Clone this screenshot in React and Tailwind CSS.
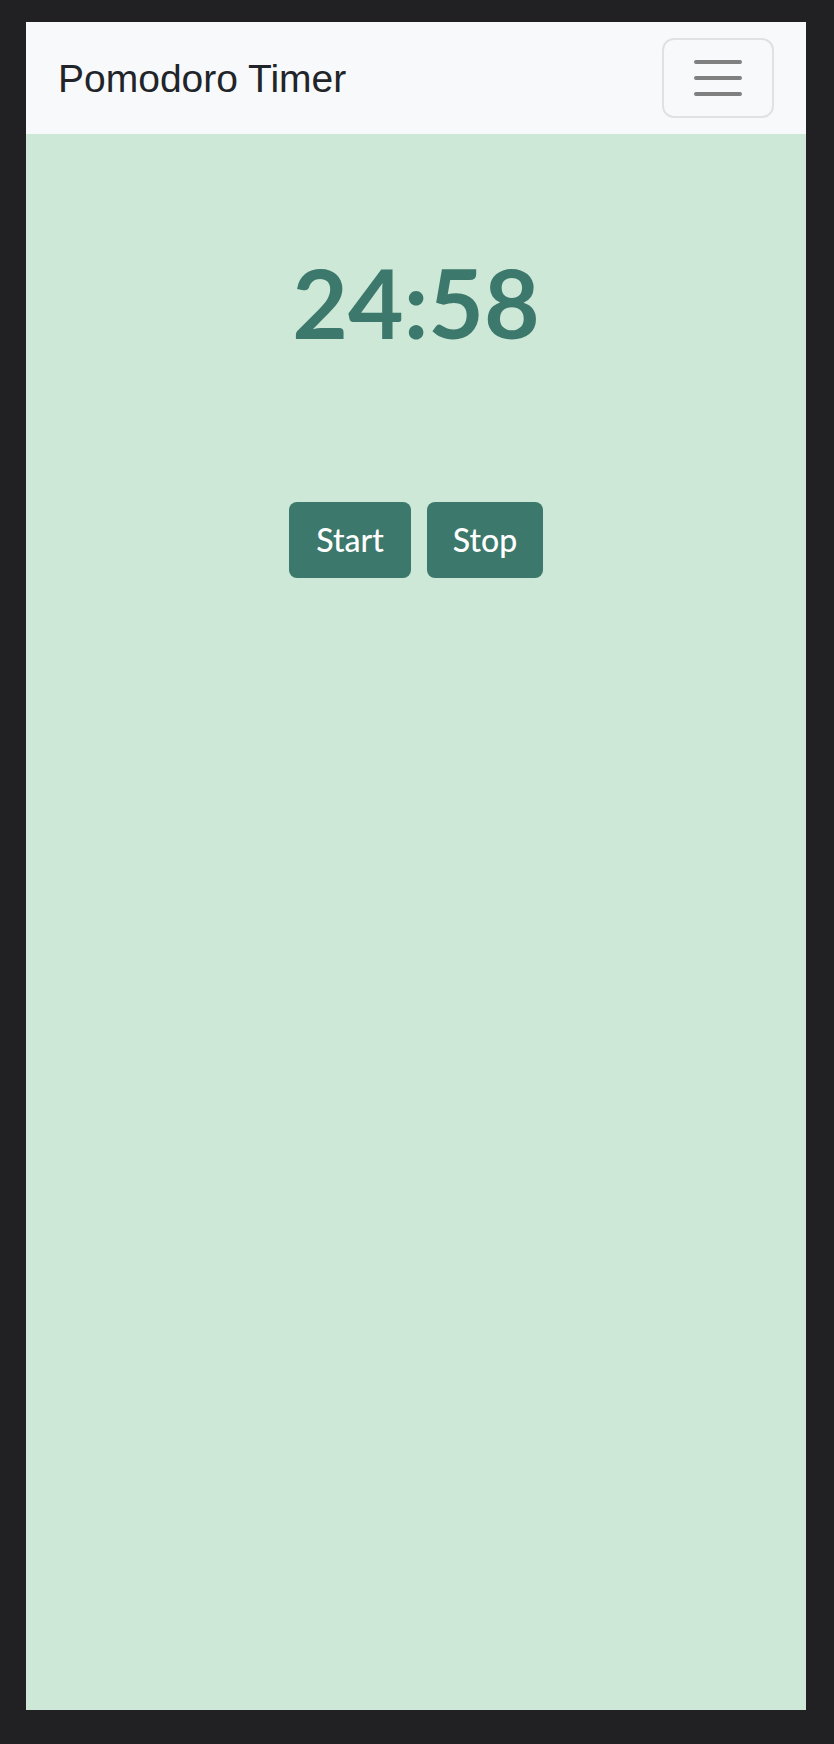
export default function App() {
  return (
    <div className="min-h-screen bg-[#212124] pl-[26px] pr-[28px] pt-[22px] pb-[34px]">
      <div className="flex h-[1688px] flex-col bg-[#cde8d7]">
        {/* navbar */}
        <nav className="flex h-[112px] items-center justify-between bg-[#f8f9fa] pl-[32px] pr-[32px]">
          <span className="font-['Liberation_Sans',Arial,sans-serif] text-[39px] leading-none text-[#212529]">
            Pomodoro Timer
          </span>
          <button className="flex h-[80px] w-[112px] flex-col items-center justify-center gap-[12px] rounded-[12px] border-2 border-[#e0e1e2]">
            <span className="block h-[4px] w-[48px] rounded-full bg-[#808080]"></span>
            <span className="block h-[4px] w-[48px] rounded-full bg-[#808080]"></span>
            <span className="block h-[4px] w-[48px] rounded-full bg-[#808080]"></span>
          </button>
        </nav>

        {/* timer */}
        <main className="flex flex-col items-center pt-[110px] font-['Lato','Open_Sans',sans-serif]">
          <h1 className="text-[96px] font-bold leading-[1.2] text-[#3c786b]">24:58</h1>
          <div className="mt-[143px] flex gap-[16px]">
            <button className="h-[76px] w-[122px] rounded-[8px] bg-[#3c786b] text-[32px] font-medium text-white">
              Start
            </button>
            <button className="h-[76px] w-[116px] rounded-[8px] bg-[#3c786b] text-[32px] font-medium text-white">
              Stop
            </button>
          </div>
        </main>
      </div>
    </div>
  );
}
